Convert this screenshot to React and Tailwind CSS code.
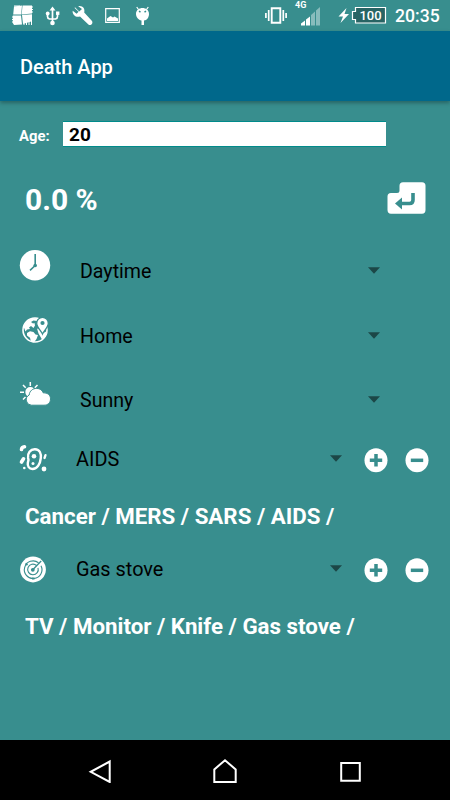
import React from 'react'

function StatusBar() {
  return (
    <div className="h-[31px] bg-[#388e8e] flex items-start justify-between text-white">
      {/* Notifications */}
      <svg className="w-[160px] h-[31px]" viewBox="0 0 160 31" fill="currentColor">
        <path d="M14 6.5l8-1-.8 9h-8zM22.500 5.500h9.500v8l-10.300 1zM12.800 15.500h8.200l1 9-8 .5-1.200-2zM22 15l10-.8v7l-9 2.800z" />
        <path d="M15 5v4M17 5v4M19 5v4M12 17h4M12 19.500h4M12 22h4M29 7h4M29 9.500h4M29 12h4M24 21v4M26.500 21v4M29 21v4M31.500 20v5" stroke="currentColor" strokeWidth="1" />
        <path d="M52.500 8v15M47.500 13v3.500q0 2 2 2.500h6q2-.5 2-2.500V12" fill="none" stroke="currentColor" strokeWidth="1.700" />
        <path d="M52.500 6.500l3 4h-6z" />
        <circle cx="47.700" cy="13.500" r="1.900" />
        <path d="M56 11.500h3.400v3.400H56z" />
        <circle cx="52.500" cy="23" r="2.300" />
        <path d="M75 7.200l4.200 4.200 2.800-2.500-3.800-2.700c3.500-1.200 7.300 1.800 6 6.300l7.800 8.600c1.500 2.300-1.200 5.200-3.600 3.500L80 16.500c-4 1.500-8-2-7.300-5.800l3.900 3 2-2-4-3.700z" />
        <path d="M105.700 8.700h13.600v13.600h-13.600z" fill="none" stroke="currentColor" strokeWidth="1.200" />
        <path d="M107 18.500l3.500-2.500 2.500 1.500 1.500-1 3.500 2v2.500h-11z" />
        <path d="M138.500 9.500l-1.800-2.500M146.500 9.500l1.800-2.500" fill="none" stroke="currentColor" strokeWidth="1.200" />
        <path d="M136 14c0-8 13-8 13 0 0 3-2 6.500-5 6.500V25h-2.500v-4.500c-3-.5-5.500-3.500-5.500-6.500z" />
        <path d="M139 11.200l1.500 1M146 11.200l-1.500 1" stroke="#388e8e" strokeWidth="1.500" />
      </svg>
      {/* Radio, battery and clock */}
      <div className="flex">
        <svg className="w-[139px] h-[31px]" viewBox="255 0 139 31" fill="none" stroke="currentColor">
          <path d="M271.700 8.200h8.600v14.600h-8.600z" strokeWidth="1.900" />
          <path d="M268.700 10v11M283.300 10v11M265.900 13v5M286.100 13v5" strokeWidth="1.700" />
          <text x="295" y="8" fill="currentColor" stroke="none" className="font-['Roboto'] text-[9px] font-bold">4G</text>
          <path d="M301 25.500v-2l4-3v5zM306 25.500v-6l4-3v9z" fill="currentColor" stroke="none" />
          <path d="M311 25.500V15l4-3.500v14zM316 25.500V10.500l4-3.500v18.500z" fill="#88bcbc" stroke="none" />
          <path d="M346.500 8l-8 8.500h4.500l-2.500 6.500 8.500-9h-4.500z" fill="currentColor" stroke="none" />
          <path d="M355.500 7.500h30v15.500h-30v-3.500h-3v-8h3z" fill="#286464" strokeWidth="1.200" />
          <text x="370.500" y="20" textAnchor="middle" fill="currentColor" stroke="none" className="font-['Roboto'] text-[13px] font-medium">100</text>
        </svg>
        <span className="w-[56px] pl-[1px] pt-[4px] text-[17.600px] leading-6 font-medium">20:35</span>
      </div>
    </div>
  )
}

function ClockIcon() {
  return (
    <svg className="w-10 h-10" viewBox="15 246 40 40">
      <circle cx="35" cy="265.300" r="15.200" fill="#fff" />
      <path d="M35.200 254v11.500l-5.200 4.800" fill="none" stroke="#388e8e" strokeWidth="1.600" />
      <circle cx="35.200" cy="265.500" r="1.800" fill="#388e8e" />
    </svg>
  )
}

function GlobeIcon() {
  return (
    <svg className="w-10 h-10" viewBox="15 310 40 40">
      <circle cx="35" cy="330" r="12" fill="none" stroke="#fff" strokeWidth="1.600" />
      <path d="M23.500 326.500c1.500-4 4.500-7 8.500-8 2-.5 4-.5 6 0l-1 2.500-3.500-.5-2.500 1.500 2 1.500 1.500-.5.500 2.500-1.500 2.500-2.500-2-2 1.500 1 1.500-3 .5-1.500 2z" fill="#fff" />
      <path d="M27 333l3-1.800 3.500.8 2 2.500 2.500.5-1.500 4-2.500 3.500-3-.8-1-4-3-2.200z" fill="#fff" />
      <path d="M37 328.500l2.500 1 3 4 4.500-2.500c0 3.500-2 6.800-5 8.500l-2-3.500-1.500-2.500z" fill="#fff" />
      <path d="M42.500 334c-1.500-3.500-5.800-6.800-5.800-10.800a5.800 5.800 0 0 1 11.600 0c0 4-4.300 7.300-5.800 10.800z" fill="#fff" stroke="#388e8e" strokeWidth="1.300" />
      <circle cx="42.500" cy="323" r="2.100" fill="#388e8e" />
    </svg>
  )
}

function WeatherIcon() {
  return (
    <svg className="w-10 h-10" viewBox="15 375 40 40" fill="#fff">
      <path d="M30.300 382v4M23 385l2.700 2.800M37.500 385l-2.700 2.800M20 392.300h4M23 399.500l2.500-2.500" stroke="#fff" strokeWidth="1.500" />
      <circle cx="30.300" cy="392" r="5" />
      <path d="M31.500 405.200a5.400 5.400 0 0 1-2.300-10.200c.3-4 3.500-6.600 7.500-6.600 3.300 0 5.600 1.900 6.600 4.500 4-.3 7.200 2 7.200 6s-2.900 6.300-6.500 6.300z" stroke="#388e8e" strokeWidth="1" />
    </svg>
  )
}

function GermIcon() {
  return (
    <svg className="w-10 h-10" viewBox="15 440 40 40" fill="none" stroke="#fff" strokeLinecap="round">
      <path d="M35 450.200c4.800.2 6.300 4.300 5.800 8.800-.5 5.500-3.500 11-8.300 11-3.500 0-5.200-3-4.700-6 .3-2 1.200-2.700.3-5-.9-4.800 2.400-9 6.900-8.800z" strokeWidth="2.400" />
      <circle cx="34" cy="457.200" r="2.300" fill="#fff" stroke="none" />
      <circle cx="33" cy="464.500" r="1.500" fill="#fff" stroke="none" />
      <path d="M21.500 450.500c.2-1.500 1.300-2.500 3-2.700M21.500 463l2-3.200" strokeWidth="3.600" />
      <path d="M44.500 459l1-2.800" strokeWidth="2.300" />
      <circle cx="24.300" cy="469" r="1.300" fill="#fff" stroke="none" />
      <circle cx="44" cy="470" r="2.400" fill="#fff" stroke="none" />
    </svg>
  )
}

function RadarIcon() {
  return (
    <svg className="w-10 h-10" viewBox="15 549 40 40" fill="none" stroke="#388e8e">
      <circle cx="33" cy="569.500" r="12.900" fill="#fff" stroke="none" />
      <path d="M38.500 562.700a8.800 8.800 0 1 0 2.500 3" strokeWidth="1.100" />
      <path d="M36.500 565.500a5.300 5.300 0 1 0 1.500 2.300" strokeWidth="1.100" />
      <path d="M32.500 570l8.700-9" strokeWidth="1.300" />
      <circle cx="32.800" cy="569.800" r="1.900" fill="#388e8e" stroke="none" />
      <path d="M25.500 563.500l2 1.500M32 578.500h2.500" strokeWidth="1.800" />
    </svg>
  )
}

function Spinner({ label }) {
  return (
    <div className="flex-1 flex items-center justify-between text-black">
      <span className="pt-0.5">{label}</span>
      <svg className="w-3 h-[7px]" viewBox="0 0 12 7" fill="#1c4747">
        <path d="M0 .2h12L6 6.700z" />
      </svg>
    </div>
  )
}

function RoundButton({ plus }) {
  return (
    <button className="flex">
      <svg className="w-[24px] h-[25px]" viewBox="0 0 24 25">
        <ellipse cx="12" cy="12.300" rx="11.500" ry="12" fill="#fff" />
        <path d={plus ? 'M5.800 12.300h12.400M12 6v12.600' : 'M5.800 12.300h12.400'} stroke="#388e8e" strokeWidth="3.500" />
      </svg>
    </button>
  )
}

function SelectRow({ icon, label, className }) {
  return (
    <div className={`flex items-center pl-[15px] pr-[70px] text-[19.600px] ${className}`}>
      <div className="w-[65px] pb-[11px]">{icon}</div>
      <Spinner label={label} />
    </div>
  )
}

function ListRow({ icon, label, className }) {
  return (
    <div className={`flex items-center pl-[15px] pr-[21px] text-[19.900px] ${className}`}>
      <div className="w-[61px]">{icon}</div>
      <Spinner label={label} />
      <div className="flex gap-[17px] pl-[22px] pt-0.5">
        <RoundButton plus />
        <RoundButton />
      </div>
    </div>
  )
}

function NavBar() {
  return (
    <div className="h-[60px] bg-black flex items-center justify-between px-[87px]">
      <svg className="w-[26px] h-[26px]" viewBox="87 757 26 26" fill="none" stroke="#fff" strokeWidth="2">
        <path d="M109.700 761.500v20.500l-19-10.200z" />
      </svg>
      <svg className="w-[26px] h-[26px]" viewBox="212 757 26 26" fill="none" stroke="#fff" strokeWidth="2">
        <path d="M214.300 782v-12.500l10.700-9.300 10.700 9.300V782z" />
      </svg>
      <svg className="w-[26px] h-[26px]" viewBox="337 757 26 26" fill="none" stroke="#fff" strokeWidth="2">
        <path d="M341.200 763h18.600v17.800h-18.600z" />
      </svg>
    </div>
  )
}

function App() {
  return (
    <div className="w-[450px] h-[800px] flex flex-col overflow-hidden bg-[#388e8e] font-['Roboto',sans-serif] text-white">
      <StatusBar />
      <header className="h-[70px] shrink-0 bg-[#00688b] flex items-center pl-5 pt-0.5 shadow-[0_2px_4px_rgba(0,0,0,0.3)]">
        <h1 className="text-[20px] font-medium">Death App</h1>
      </header>

      <main className="flex-1">
        {/* Age */}
        <div className="h-[58px] pt-5 flex items-start">
          <span className="w-[63px] pl-[19px] pt-[5px] text-[14.800px] leading-5 font-bold">Age:</span>
          <div className="w-[323px] h-[26px] bg-white border-y border-[#008b8b] pl-[6px] pt-0.5 flex items-center text-[19px] font-bold text-black">
            20
          </div>
        </div>

        {/* Result */}
        <div className="h-20 flex items-center justify-between pl-[25px] pr-6">
          <span className="text-[30px] font-bold">0.0 %</span>
          <svg className="w-[39px] h-[32px] mb-0.5" viewBox="387 182 39 32">
            <path d="M403 182.300h19q3.500 0 3.500 3.500V210q0 3.700-3.500 3.700h-31q-3.500 0-3.500-3.700v-13.500q0-3.500 3.500-3.500h6q2.500 0 2.500-2.500v-4.700q0-3.500 3.500-3.500z" fill="#fff" />
            <path d="M413 193v7q0 3.500-3.500 3.500H400" fill="none" stroke="#388e8e" strokeWidth="3.600" />
            <path d="M395 203.500l7-6v12z" fill="#388e8e" />
          </svg>
        </div>

        <SelectRow icon={<ClockIcon />} label="Daytime" className="h-16" />
        <SelectRow icon={<GlobeIcon />} label="Home" className="h-[65px]" />
        <SelectRow icon={<WeatherIcon />} label="Sunny" className="h-16" />

        <ListRow icon={<GermIcon />} label="AIDS" className="h-[54px]" />
        <p className="h-[60px] flex items-center pl-[25px] pt-0.5 text-[22.300px] font-bold">
          Cancer / MERS / SARS / AIDS /
        </p>
        <ListRow icon={<RadarIcon />} label="Gas stove" className="h-[46px]" />
        <p className="h-[68px] flex items-center pl-[25px] pt-0.5 text-[22.300px] font-bold">
          TV / Monitor / Knife / Gas stove /
        </p>
      </main>

      <NavBar />
    </div>
  )
}

export default App
